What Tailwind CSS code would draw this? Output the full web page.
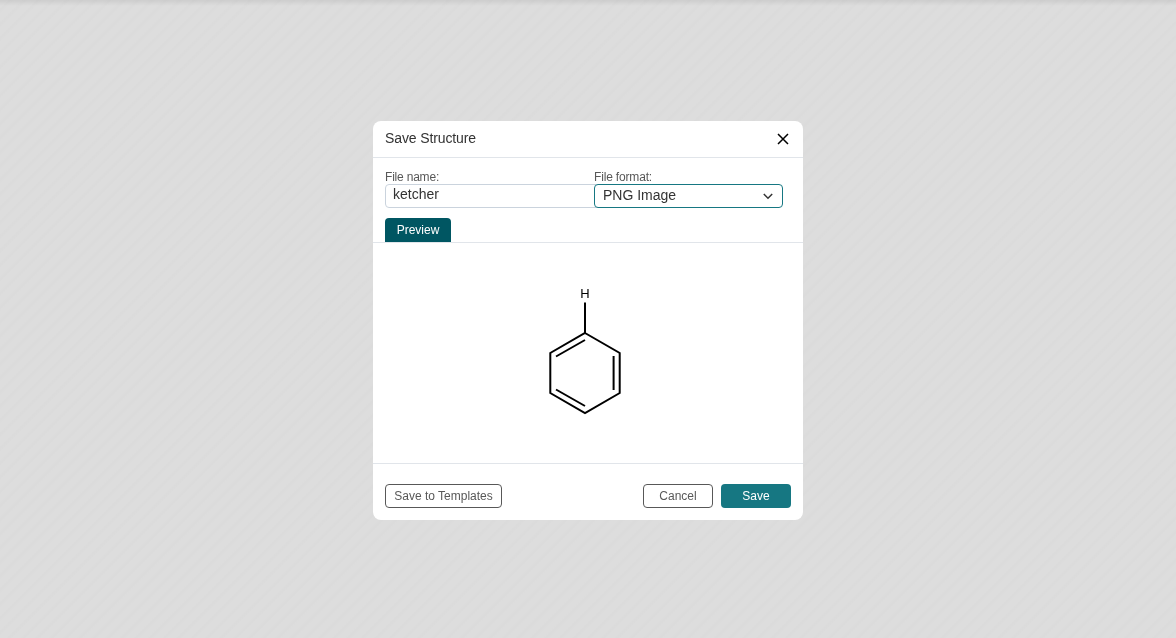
<!DOCTYPE html>
<html lang="en">
<head>
<meta charset="utf-8">
<title>Save Structure</title>
<script src="https://cdn.jsdelivr.net/npm/@tailwindcss/browser@4"></script>
</head>
<body class="h-screen overflow-hidden bg-[#dddddd] font-['Liberation_Sans',Arial,sans-serif]">
<div class="flex h-full items-start justify-center bg-[linear-gradient(to_bottom,rgba(0,0,0,0.07),transparent_6px),repeating-linear-gradient(135deg,#dddddd_0px,#dddddd_5px,#dbdbdb_7px,#dbdbdb_8px,#dddddd_10px)] pt-[121px]">
  <main class="flex h-[399px] w-[430px] flex-col rounded-lg bg-white text-[#333333] will-change-transform">
    <header class="flex h-[37px] shrink-0 items-center justify-between border-b border-[#e1e5ea] pr-[14px] pl-3">
      <h1 class="-mt-[3px] text-sm leading-4 tracking-[-0.12px]">Save Structure</h1>
      <button aria-label="Close"><svg class="block size-3 text-black" viewBox="0 0 12 12" fill="none" stroke="currentColor" stroke-width="1.5"><path d="M1 1l10 10M11 1L1 11"/></svg></button>
    </header>
    <div class="flex h-[60px] shrink-0 pt-3 pl-3">
      <label class="flex w-[209px] flex-col text-xs text-[#585858]">
        <span class="h-[14px] leading-[14px] tracking-[-0.2px]">File name:</span>
        <span class="flex h-6 w-[217px] shrink-0 rounded border border-[#cad3dd] pl-[7px] text-sm leading-[19px] text-[#333333]">ketcher</span>
      </label>
      <label class="relative flex w-[189px] flex-col text-xs text-[#585858]">
        <span class="h-[14px] leading-[14px] tracking-[-0.17px]">File format:</span>
        <span class="flex h-6 items-center justify-between rounded border border-[#167782] bg-white pr-[9px] pl-2 text-sm leading-5 text-[#333333]">
          <span class="-mt-0.5">PNG Image</span>
          <svg class="size-[10px]" viewBox="0 0 10 10" fill="none" stroke="currentColor" stroke-width="1.5"><path d="M.8 3l4.2 4.2L9.2 3"/></svg>
        </span>
      </label>
    </div>
    <div class="flex h-[25px] shrink-0 border-b border-[#e1e5ea] pl-3">
      <button class="h-6 w-[66px] rounded-t bg-[#005662] text-xs leading-6 text-white">Preview</button>
    </div>
    <section class="h-[220px] shrink-0">
      <svg class="block h-[220px] w-[430px]" viewBox="373 243 430 220" fill="none" stroke="#000" stroke-width="2">
        <text x="585" y="298" text-anchor="middle" font-size="13" fill="#000" stroke="none">H</text>
        <path d="M585 302.5V333M585 333l34.7 20v40L585 413l-34.7-20v-40zM556 356.5l29-16.5M613.6 356v34M556 389.5l29 16.5"/>
      </svg>
    </section>
    <footer class="flex h-[57px] items-start gap-2 border-t border-[#e1e5ea] px-3 pt-5 text-xs text-[#585858]">
      <button class="mr-auto h-6 w-[117px] rounded border border-[#585858]">Save to Templates</button>
      <button class="h-6 w-[70px] rounded border border-[#585858]">Cancel</button>
      <button class="h-6 w-[70px] rounded bg-[#167782] text-white">Save</button>
    </footer>
  </main>
</div>
</body>
</html>
